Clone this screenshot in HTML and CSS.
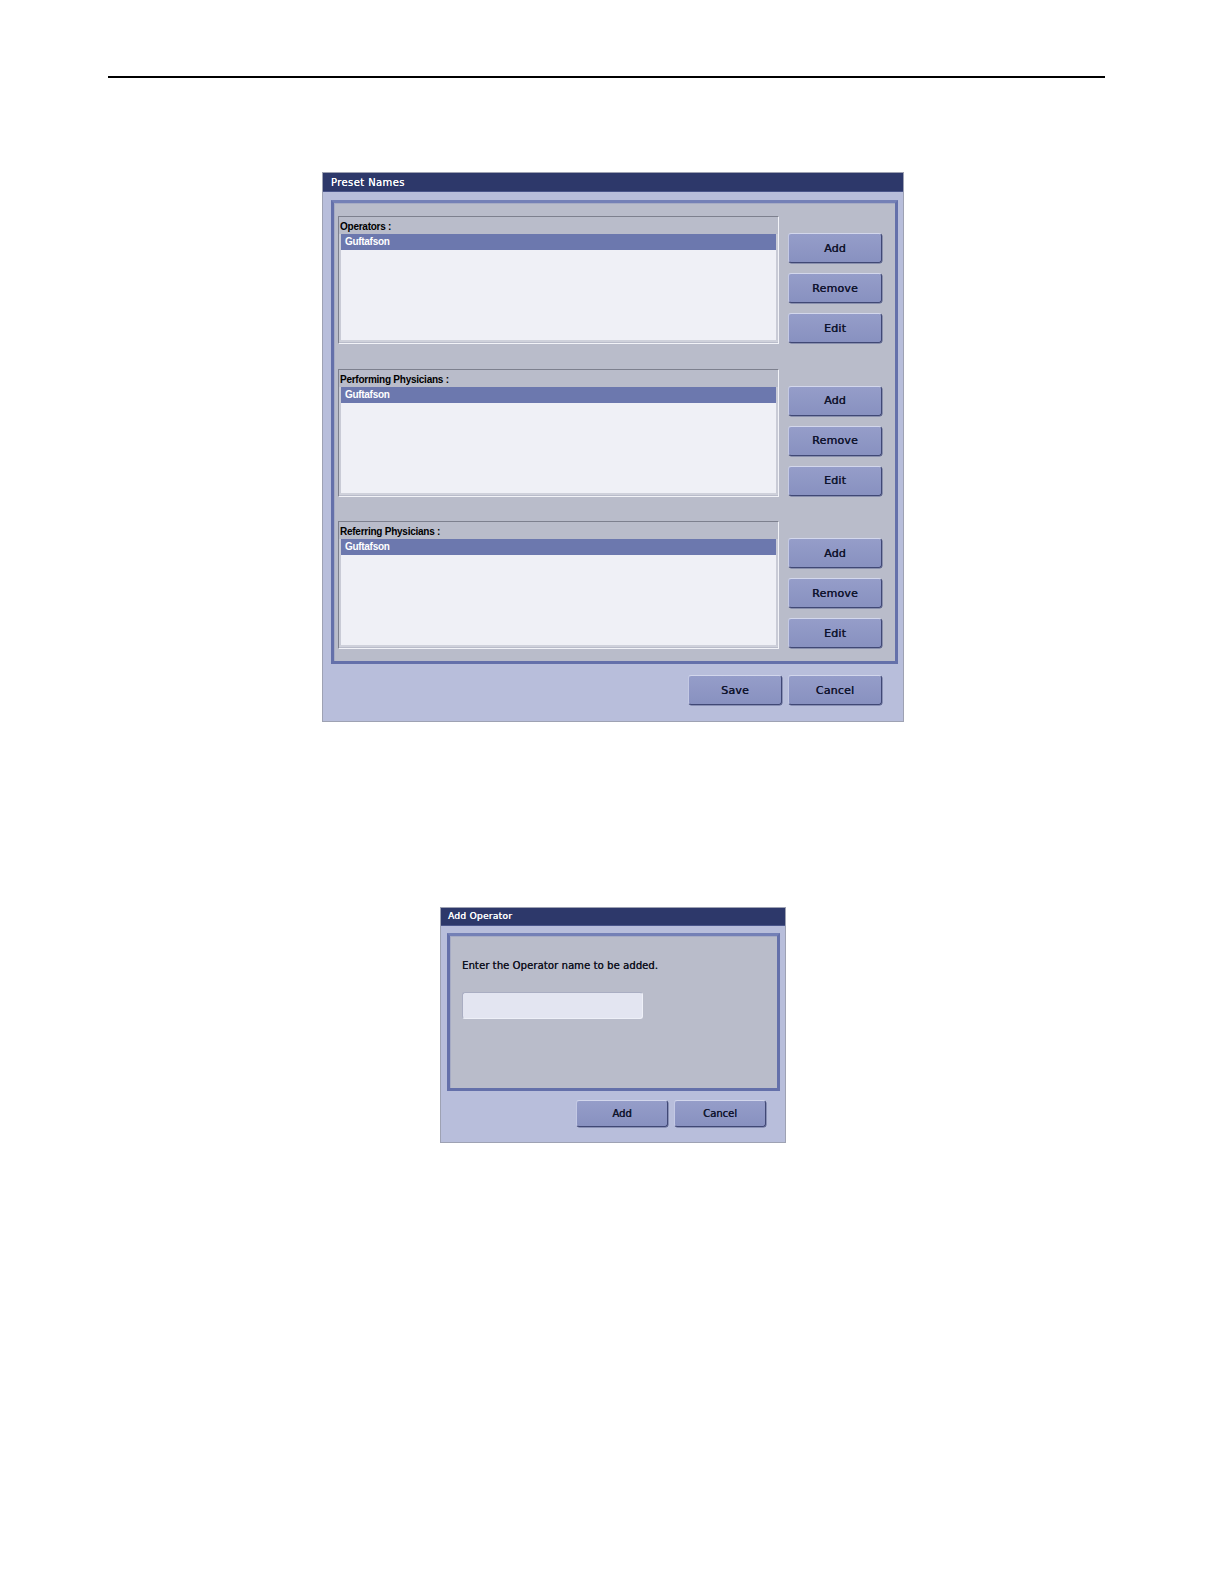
FILE: index.html
```html
<!DOCTYPE html>
<html lang="en">
<head>
<meta charset="utf-8">
<title>Preset Names</title>
<link rel="stylesheet" href="styles.css">
</head>
<body>
<div class="page">
  <div class="rule"></div>

  <div class="dialog dlg-preset">
    <div class="titlebar">Preset Names</div>
    <div class="dlg-body">
      <div class="panel panel-preset">
        <div class="section">
          <div class="group">
            <div class="group-label">Operators :</div>
            <div class="list">
              <div class="list-row selected">Guftafson</div>
            </div>
          </div>
          <div class="btn-col">
            <button class="btn btn-lg">Add</button>
            <button class="btn btn-lg">Remove</button>
            <button class="btn btn-lg">Edit</button>
          </div>
        </div>
        <div class="section">
          <div class="group">
            <div class="group-label">Performing Physicians :</div>
            <div class="list">
              <div class="list-row selected">Guftafson</div>
            </div>
          </div>
          <div class="btn-col">
            <button class="btn btn-lg">Add</button>
            <button class="btn btn-lg">Remove</button>
            <button class="btn btn-lg">Edit</button>
          </div>
        </div>
        <div class="section">
          <div class="group">
            <div class="group-label">Referring Physicians :</div>
            <div class="list">
              <div class="list-row selected">Guftafson</div>
            </div>
          </div>
          <div class="btn-col">
            <button class="btn btn-lg">Add</button>
            <button class="btn btn-lg">Remove</button>
            <button class="btn btn-lg">Edit</button>
          </div>
        </div>
      </div>
      <div class="footer footer-preset">
        <button class="btn btn-lg">Save</button>
        <button class="btn btn-lg">Cancel</button>
      </div>
    </div>
  </div>

  <div class="dialog dlg-add">
    <div class="titlebar titlebar-sm">Add Operator</div>
    <div class="dlg-body dlg-body-add">
      <div class="panel panel-add">
        <div class="prompt">Enter the Operator name to be added.</div>
        <div class="input"></div>
      </div>
      <div class="footer footer-add">
        <button class="btn btn-sm">Add</button>
        <button class="btn btn-sm">Cancel</button>
      </div>
    </div>
  </div>
</div>
</body>
</html>
```

FILE: styles.css
```css
* { box-sizing: border-box; }

html, body {
  margin: 0;
  padding: 0;
  background: #ffffff;
}

body {
  font-family: "DejaVu Sans", "Liberation Sans", sans-serif;
  width: 1224px;
  height: 1584px;
}

.page {
  padding-top: 76px;
}

.rule {
  height: 2px;
  background: #000000;
  margin-left: 108px;
  width: 997px;
}

/* ---------- dialog frame ---------- */
.dialog {
  background: #b8bedb;
  border: 1px solid #9ea2b3;
  display: flex;
  flex-direction: column;
}

.dlg-preset {
  margin-top: 94px;
  margin-left: 322px;
  width: 582px;
  height: 550px;
}

.dlg-add {
  margin-top: 185px;
  margin-left: 440px;
  width: 346px;
  height: 236px;
}

.titlebar {
  height: 19px;
  line-height: 19px;
  background: #2d386a;
  color: #ffffff;
  font-size: 10px;
  padding-left: 8px;
  letter-spacing: 0.4px;
  border-bottom: 1px solid #4a558a;
  text-shadow: 0 0 0.4px #ffffff;
}

.titlebar-sm {
  height: 18px;
  line-height: 17px;
  font-size: 9px;
  padding-left: 7px;
  letter-spacing: 0.3px;
  text-shadow: 0.3px 0 0 #ffffff;
}

.dlg-body {
  padding: 8px 5px 0 8px;
}

.dlg-body-add {
  padding: 7px 5px 0 6px;
}

/* ---------- panel ---------- */
.panel {
  background: #b9bcca;
  border: 3px solid #6470aa;
  border-top-color: #7480b6;
  box-shadow: inset 1px 1px 0 #a6abc4;
}

.panel-preset {
  height: 464px;
  padding: 13px 13px 12px 4px;
  display: flex;
  flex-direction: column;
  gap: 24.5px;
}

.panel-add {
  height: 158px;
  padding: 23px 12px 0 12px;
}

/* ---------- section (group + buttons) ---------- */
.section {
  display: flex;
  gap: 9px;
  height: 128px;
}

.group {
  width: 441px;
  height: 128px;
  border: 1px solid;
  border-color: #7d808e #f2f3f8 #f2f3f8 #7d808e;
  display: flex;
  flex-direction: column;
}

.group-label {
  height: 17px;
  line-height: 19px;
  font-family: "Liberation Sans", Arial, sans-serif;
  font-weight: bold;
  font-size: 10px;
  letter-spacing: -0.25px;
  color: #000000;
  padding-left: 1px;
}

.list {
  flex: 1;
  background: #eff0f6;
  border: 2px solid;
  border-color: #c9cbd6 #c9cbd6 #cfd1db #c9cbd6;
  border-top: none;
  margin: 0 0 1px 0;
}

.list-row {
  height: 16px;
  line-height: 16px;
  font-family: "Liberation Sans", Arial, sans-serif;
  font-weight: bold;
  font-size: 10px;
  letter-spacing: -0.3px;
  padding-left: 4px;
}

.list-row.selected {
  background: #6c78ae;
  color: #ffffff;
}

.btn-col {
  display: flex;
  flex-direction: column;
  gap: 10px;
  padding-top: 17px;
}

/* ---------- buttons ---------- */
.btn {
  margin: 0;
  padding: 0;
  font-family: "DejaVu Sans", "Liberation Sans", sans-serif;
  color: #10142e;
  background: linear-gradient(#959dc9, #8891c0);
  border: 1px solid;
  border-color: #d3d7ec #404875 #404875 #c4c9e4;
  border-radius: 3px;
  box-shadow: 0.5px 0.5px 0 #5b6390;
  cursor: default;
  text-shadow: 0.35px 0 0 #10142e;
}

.btn-lg {
  width: 94px;
  height: 30px;
  font-size: 11px;
  letter-spacing: 0.2px;
}

.btn-sm {
  width: 92px;
  height: 27px;
  font-size: 10px;
  letter-spacing: 0px;
}

.footer {
  display: flex;
  justify-content: flex-end;
  gap: 6px;
}

.footer-preset {
  padding: 11px 16px 0 0;
}

.footer-add {
  padding: 9px 14px 0 0;
}

/* ---------- add dialog content ---------- */
.prompt {
  font-size: 10px;
  line-height: 14px;
  color: #111322;
  letter-spacing: 0.1px;
  text-shadow: 0.25px 0 0 #111322;
}

.input {
  margin-top: 19px;
  width: 181px;
  height: 27px;
  background: #e3e5f1;
  border: 1px solid;
  border-color: #a9adc2 #eef0f8 #eef0f8 #a9adc2;
  border-radius: 3px;
}
```
